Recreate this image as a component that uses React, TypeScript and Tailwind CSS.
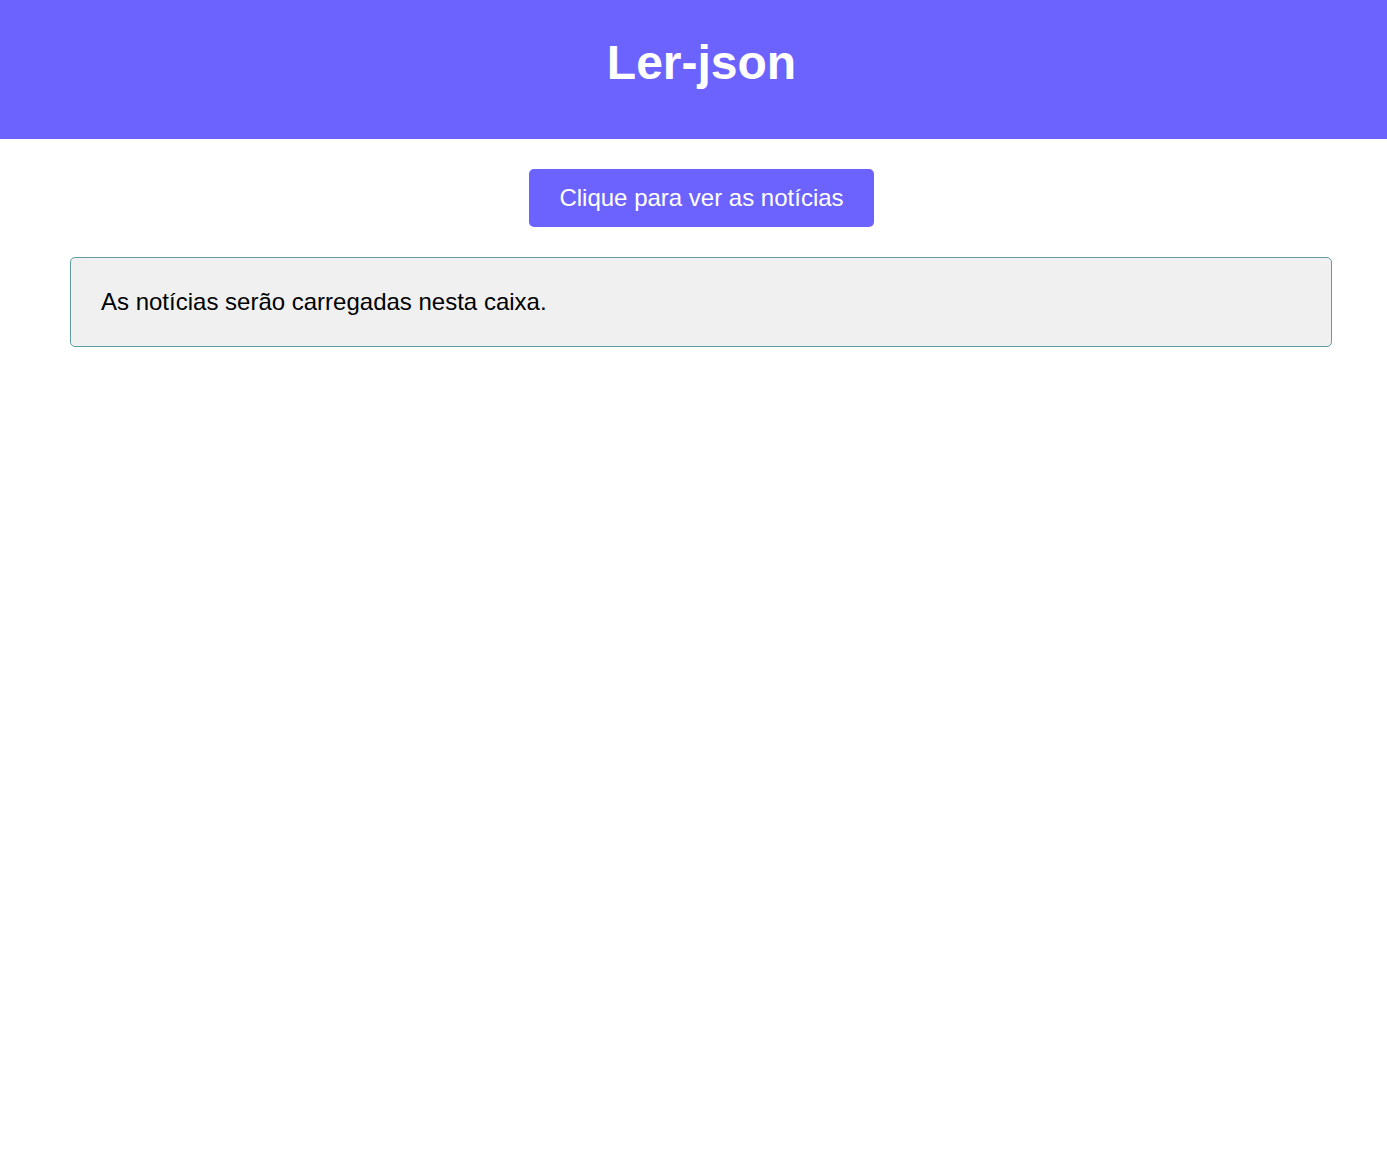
export default function App() {
  return (
    <div className="min-h-screen bg-white" style={{ fontFamily: '"Liberation Sans", Arial, sans-serif' }}>
      <header className="h-[139px] bg-[#6c63ff] pl-[16px] pt-[35px]">
        <h1 className="text-center text-[48px] font-bold leading-[55px] text-white">Ler-json</h1>
      </header>
      <div className="mt-[30px] flex justify-center pl-[16px]">
        <button className="rounded-[5px] bg-[#6c63ff] px-[30px] py-[15px] text-[24px] leading-[28px] text-white">
          Clique para ver as notícias
        </button>
      </div>
      <div className="ml-[70px] mr-[55px] mt-[30px] rounded-[5px] border border-[#5f9ea0] bg-[#f0f0f0] p-[30px] text-[24px] leading-[28px] text-black">
        As notícias serão carregadas nesta caixa.
      </div>
    </div>
  );
}
